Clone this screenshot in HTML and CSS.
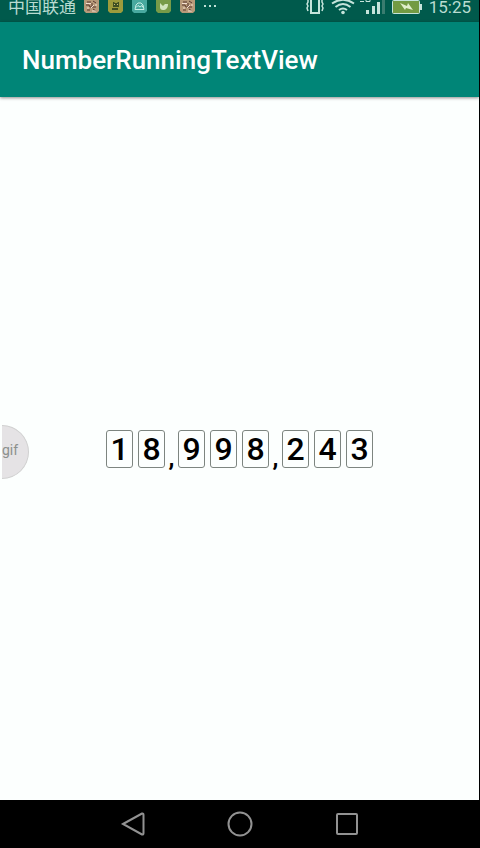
FILE: index.html
```html
<!DOCTYPE html>
<html lang="en">
<head>
<meta charset="utf-8">
<meta name="viewport" content="width=device-width, initial-scale=1">
<title>NumberRunningTextView</title>
<link rel="stylesheet" href="styles.css">
</head>
<body>
<div class="status">
  <span class="carrier" lang="zh">中国联通</span>
  <div class="notices">
    <svg class="notice" viewBox="0 0 15 15"><path fill="#b79a79" d="M0 0h15v11l-2 2H2l-2-2z"/><path fill="none" stroke="#5a3830" d="M3 2h4M9 1l3 2M2 5h3l1 2h6M3 10h3M9 9l3 2M8 3v3"/><path fill="none" stroke="#f4dfcf" d="M2 3.500h5M7 8l3-3M3 8h2M8 11h4M11 5h2"/></svg>
    <svg class="notice" viewBox="0 0 15 15"><path fill="#9c9b3c" d="M0 0h15v11l-2 2H2l-2-2z"/><path fill="#3e4f22" d="M5 2h1l1 1h2l1-1h1v5H5zM4 8h6v2H4z"/><path fill="#c8c07a" d="M6 4h1v1H6zM9 4h1v1H9z"/></svg>
    <svg class="notice" viewBox="0 0 15 15"><path fill="#48a99f" d="M0 0h15v11l-2 2H2l-2-2z"/><path fill="none" stroke="#c7eee5" d="M3 9.500 4 5l2-2h3l2 2 1 4.500zM4 7.500l2-2 2 1.500 2-1.500 1 2"/></svg>
    <svg class="notice" viewBox="0 0 15 15"><path fill="#779b48" d="M0 0h15v11l-2 2H2l-2-2z"/><path fill="#d1e5bd" d="M4 3l3 3 2-2h3c0 4-2 6-5 6-2 0-3-1-3-3z"/></svg>
    <svg class="notice" viewBox="0 0 15 15"><path fill="#b79a79" d="M0 0h15v11l-2 2H2l-2-2z"/><path fill="none" stroke="#5a3830" d="M3 2h4M9 1l3 2M2 5h3l1 2h6M3 10h3M9 9l3 2M8 3v3"/><path fill="none" stroke="#f4dfcf" d="M2 3.500h5M7 8l3-3M3 8h2M8 11h4M11 5h2"/></svg>
    <svg class="more" viewBox="0 0 12 15"><path fill="#bfe0d6" d="M0 5h2v2H0zM5 5h2v2H5zM10 5h2v2h-2z"/></svg>
  </div>
  <div class="system">
    <svg class="vibrate" viewBox="0 0 18 15"><path fill="none" stroke="#c5e4db" stroke-width="2" d="M5 0v13h8V0"/><path fill="none" stroke="#c5e4db" stroke-width="1.500" d="M2 0v2l-1 2 1 2-1 2 1 3M16 0v2l1 2-1 2 1 2-1 3"/></svg>
    <div class="network">
      <svg class="wifi" viewBox="0 0 24 15"><g fill="none" stroke="#c5e4db" stroke-width="2"><path d="M1 3.500Q12-4 23 3.500M4.500 7q7.500-6 15 0M8 10q4-3 8 0"/></g><circle cx="12" cy="12.500" r="1.800" fill="#c5e4db"/></svg>
      <svg class="signal" viewBox="0 0 26 15"><path fill="none" stroke="#c5e4db" d="M1 1.500h4M7 0v1.500h4V0"/><path fill="#c5e4db" d="M7 10h3v4H7zM13 6h3v8h-3zM18 2h3v12h-3z"/><path fill="#397c6f" d="M23 0h3v14h-3z"/></svg>
    </div>
    <svg class="battery" viewBox="0 0 30 15"><rect x=".5" y=".5" width="27" height="13" rx="1" fill="#739b43" stroke="#c5e4db"/><path fill="#c5e4db" d="M28 4h2v6h-2z"/><path fill="#e1efcc" d="M8 3l7 3 1-3 5 7-7-2-1 2z"/></svg>
    <time class="clock">15:25</time>
  </div>
</div>
<header class="appbar"><h1 class="title">NumberRunningTextView</h1></header>
<main class="content">
  <button class="recorder" type="button">gif</button>
  <div class="number">
    <span class="digit">1</span><span class="digit">8</span><span class="comma">,</span><span class="digit">9</span><span class="digit">9</span><span class="digit">8</span><span class="comma">,</span><span class="digit">2</span><span class="digit">4</span><span class="digit">3</span>
  </div>
</main>
<nav class="navbar">
  <button class="key" type="button" aria-label="Back"><svg viewBox="0 0 26 26"><path d="M3 13 22 2.500Q23.500 2 23.500 4v18q0 2-1.500 1.500z"/></svg></button>
  <button class="key" type="button" aria-label="Home"><svg viewBox="0 0 26 26"><circle cx="13" cy="13" r="11.500"/></svg></button>
  <button class="key" type="button" aria-label="Recent apps"><svg viewBox="0 0 26 26"><rect x="3" y="3" width="20" height="20" rx="1"/></svg></button>
</nav>
</body>
</html>
```
FILE: styles.css
```css
* { box-sizing: border-box; }

body {
  margin: 0;
  min-height: 100vh;
  display: flex;
  flex-direction: column;
  border-right: 1px solid #000;
  background: #fcfffe;
  font-family: Roboto, "Noto Sans CJK SC", sans-serif;
}

svg { display: block; }

.status {
  height: 22px;
  padding: 0 8px;
  display: flex;
  align-items: flex-start;
  background: #005a4c;
  color: #b9dcd1;
  font-size: 17px;
  line-height: 14px;
}

.notices { display: flex; gap: 9px; margin-left: 8px; }
.notice { width: 15px; height: 15px; }
.more { width: 12px; height: 15px; }
.system { display: flex; gap: 7px; margin-left: auto; }
.network { display: flex; gap: 4px; }
.vibrate { width: 18px; height: 15px; }
.wifi { width: 24px; height: 15px; }
.signal { width: 26px; height: 15px; }
.battery { width: 30px; height: 15px; }

.appbar {
  height: 75px;
  padding: 0 22px;
  display: flex;
  align-items: center;
  background: #008577;
  box-shadow: 0 1px 3px rgba(0, 0, 0, .45);
}

.title {
  margin: 0;
  color: #fff;
  font-size: 26px;
  font-weight: 500;
  line-height: 32px;
}

.content {
  flex: 1;
  position: relative;
  display: flex;
  align-items: center;
  justify-content: center;
}

.recorder {
  position: absolute;
  left: 2px;
  top: 50%;
  width: 27px;
  height: 54px;
  margin-top: -24px;
  padding: 0 10px 4px 0;
  border: 1px solid #d0d0d0;
  border-left: 0;
  border-radius: 0 27px 27px 0;
  background: #e5e3e5;
  color: #8b908d;
  font: 14px Roboto, sans-serif;
}

.number {
  display: flex;
  gap: 5px;
  color: #000;
  font-size: 32px;
  font-weight: 500;
  line-height: 36px;
}

.digit {
  width: 27px;
  height: 38px;
  border: 1px solid #7d8580;
  border-radius: 3px;
  text-align: center;
}

.comma {
  width: 3px;
  display: flex;
  justify-content: center;
  font-size: 24px;
  font-weight: 700;
  line-height: 56px;
  height: 38px;
}

.navbar {
  height: 48px;
  margin-right: -1px;
  display: flex;
  align-items: center;
  justify-content: center;
  gap: 81px;
  background: #000;
}

.key {
  width: 26px;
  height: 26px;
  padding: 0;
  border: 0;
  background: none;
}

.key svg { fill: none; stroke: #929292; stroke-width: 2; }
```
